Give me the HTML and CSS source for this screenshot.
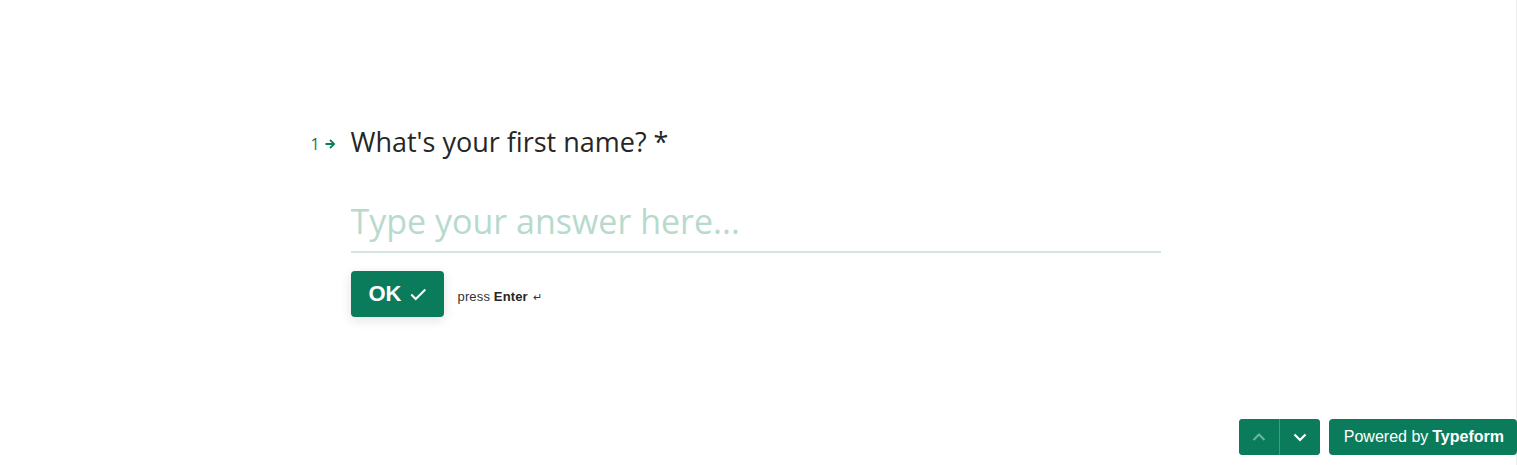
FILE: index.html
```html
<!DOCTYPE html>
<html lang="en">
<head>
<meta charset="utf-8">
<title>Typeform</title>
<link rel="stylesheet" href="styles.css">
</head>
<body>
<div class="page">
  <main class="stage">
    <section class="question">
      <div class="q-head">
        <span class="q-num">1<svg class="q-arrow" viewBox="0 0 16 16" width="12" height="12"><path d="M8 2.5 L13.5 8 L8 13.5 M13.5 8 H2" fill="none" stroke="currentColor" stroke-width="2.4"/></svg></span>
        <h1 class="q-title">What's your first name? *</h1>
      </div>
      <div class="answer">
        <input class="answer-input" type="text" placeholder="Type your answer here...">
      </div>
      <div class="actions">
        <button class="ok-btn" type="button">OK <svg class="ok-check" viewBox="0 0 16 16" width="18" height="18"><path d="M2 8.5 L6 12.5 L14.5 4" fill="none" stroke="currentColor" stroke-width="1.8"/></svg></button>
        <span class="hint">press <b>Enter</b> <span class="enter-glyph">↵</span></span>
      </div>
    </section>
  </main>
  <footer class="footer">
    <div class="nav">
      <button class="nav-btn disabled" type="button" aria-label="Previous"><svg viewBox="0 0 16 16" width="16" height="16"><path d="M2.5 11 L8 5.5 L13.5 11" fill="none" stroke="currentColor" stroke-width="2"/></svg></button>
      <button class="nav-btn" type="button" aria-label="Next"><svg viewBox="0 0 16 16" width="16" height="16"><path d="M2.5 5.5 L8 11 L13.5 5.5" fill="none" stroke="currentColor" stroke-width="2.2"/></svg></button>
    </div>
    <a class="brand" href="#">Powered by <b>Typeform</b></a>
  </footer>
</div>
</body>
</html>
```
FILE: styles.css
```css
html, body {
  margin: 0;
  padding: 0;
  background: #fff;
}
.page {
  height: 465px;
  display: flex;
  flex-direction: column;
  border-right: 1px solid #ececec;
  box-sizing: border-box;
}
.stage {
  flex: 1;
  display: flex;
  justify-content: center;
  padding-top: 123px;
  padding-right: 5px;
}
.question {
  width: 810px;
}
.q-head {
  display: flex;
  align-items: baseline;
  position: relative;
}
.q-num {
  position: absolute;
  left: -40px;
  top: 10px;
  font-family: "Open Sans", sans-serif;
  font-size: 16px;
  color: #0a7c5c;
  display: flex;
  align-items: center;
  gap: 4px;
}
.q-arrow { display: block; }
.q-title {
  margin: 0;
  font-family: "Open Sans", sans-serif;
  font-weight: 400;
  font-size: 27px;
  line-height: 38px;
  color: #262626;
}
.answer {
  margin-top: 37px;
}
.answer-input {
  width: 100%;
  box-sizing: border-box;
  border: none;
  border-bottom: 2px solid #d5e6e0;
  padding: 0 0 7px;
  font-family: "Open Sans", sans-serif;
  font-size: 34px;
  line-height: 46px;
  color: #0a7c5c;
  background: transparent;
  outline: none;
}
.answer-input::placeholder {
  color: #b8dacd;
}
.actions {
  margin-top: 18px;
  display: flex;
  align-items: center;
  gap: 14px;
}
.ok-btn {
  height: 46px;
  width: 93px;
  border: none;
  border-radius: 4px;
  background: #0a7c5c;
  color: #fff;
  font-family: "Liberation Sans", Arial, sans-serif;
  font-weight: 700;
  font-size: 22px;
  display: flex;
  align-items: center;
  justify-content: center;
  gap: 7px;
  padding: 0 0 0 1px;
  box-shadow: 0 3px 12px rgba(0,0,0,0.12);
}
.ok-check { display: block; }
.hint {
  font-family: "Liberation Sans", Arial, sans-serif;
  font-size: 13px;
  letter-spacing: 0.15px;
  color: #333;
  padding-top: 4px;
}
.hint b { color: #262626; }
.enter-glyph {
  font-size: 11px;
  margin-left: 1px;
}
.footer {
  display: flex;
  justify-content: flex-end;
  gap: 9px;
  padding-bottom: 10px;
  margin-right: -1px;
}
.nav {
  display: flex;
  border-radius: 4px;
  overflow: hidden;
  background: #0a7c5c;
}
.nav-btn {
  width: 40px;
  height: 36px;
  border: none;
  background: #0a7c5c;
  color: #fff;
  display: flex;
  align-items: center;
  justify-content: center;
  padding: 0;
}
.nav-btn + .nav-btn {
  width: 41px;
  border-left: 1px solid #3e9a80;
}
.nav-btn.disabled {
  color: #6cb59f;
}
.brand {
  height: 36px;
  display: flex;
  align-items: center;
  padding: 0 13px 0 15px;
  border-radius: 4px;
  background: #0a7c5c;
  color: #fff;
  text-decoration: none;
  font-family: "Liberation Sans", Arial, sans-serif;
  font-size: 16px;
}
.brand b { margin-left: 4px; }
```
